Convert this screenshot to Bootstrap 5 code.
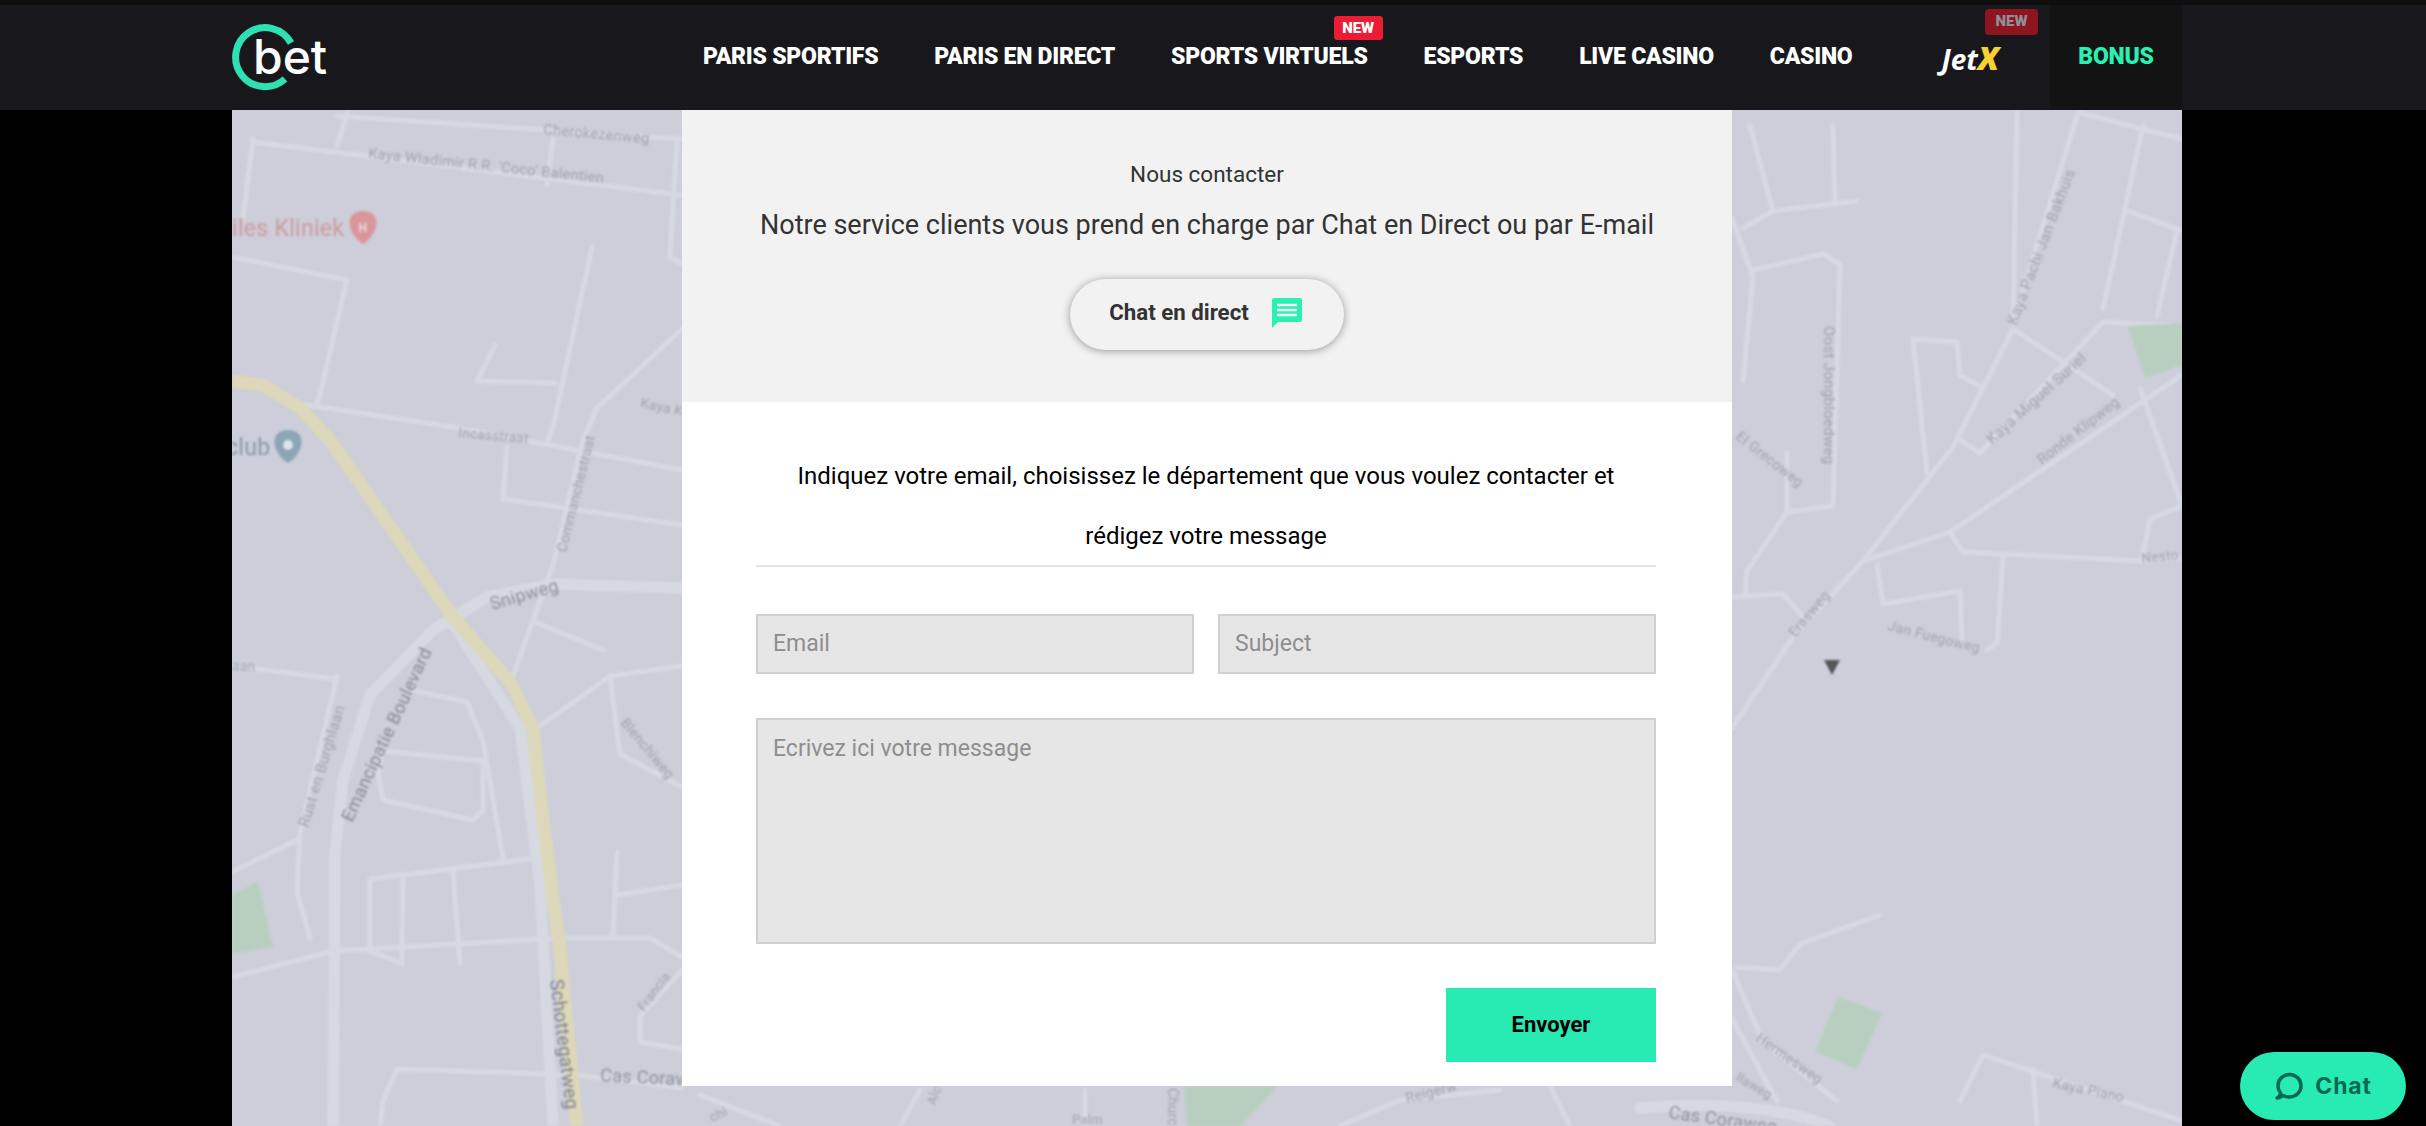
<!DOCTYPE html>
<html lang="fr">
<head>
    <meta charset="UTF-8">
    <meta name="viewport" content="width=device-width, initial-scale=1.0">
    <link href="https://cdn.jsdelivr.net/npm/bootstrap@5.3.0/dist/css/bootstrap.min.css" rel="stylesheet">
    <script src="https://cdn.jsdelivr.net/npm/bootstrap@5.3.0/dist/js/bootstrap.bundle.min.js"></script>
    <title>Cbet - Nous contacter</title>
    <style>
        html, body { height: 100%; }
        body { background: #000; font-family: Roboto, "Liberation Sans", sans-serif; overflow: hidden; }

        /* top bar */
        .top-bar { height: 110px; background: #18181c; border-top: 5px solid #0e0e0f; }
        .page-col { width: 1950px; margin-left: 232px; }
        .top-inner { height: 100%; }
        .top-links { gap: 56px; font-size: 23px; font-weight: 900; letter-spacing: -.25px; text-transform: uppercase; }
        .top-links a { color: #fff; text-decoration: none; position: relative; }
        .new-tag { position: absolute; background: #ed1c35; color: #fff; font-family: Roboto, sans-serif; font-style: normal; font-size: 15px; font-weight: 900; line-height: 1; letter-spacing: 0; border-radius: 3px; padding: 4.5px 8.5px; right: -15px; top: -24px; }
        .new-tag.dim { background: #8c1520; color: #8f8f95; right: -39px; top: -33px; padding: 5.5px 10.500px; border-radius: 4px; }
        .jetx-word { font-family: "Open Sans", sans-serif; font-style: italic; font-weight: 700; font-size: 28px; text-transform: none; letter-spacing: 0; line-height: 1; margin-left: 33px; margin-right: 51px; }
        .jetx-x { color: #f7d031; font-weight: 800; font-size: 32px; line-height: 1; }
        .bonus-cell { width: 132px; background: #131313; color: #2af0b4; font-size: 23px; font-weight: 900; letter-spacing: -.25px; }

        /* map and panel */
        .map-area { height: 1016px; position: relative; background: #cdced9; overflow: hidden; }
        .map-bg { position: absolute; inset: 0; filter: blur(.9px); }
        .map-bg text { font-family: Roboto, sans-serif; fill: #a0a3ae; letter-spacing: .3px; }
        .road { fill: none; stroke: #d7d9e2; stroke-width: 5; stroke-linecap: round; stroke-linejoin: round; }
        .road-wide { stroke-width: 11; }
        .road-main { fill: none; stroke: #dcd8b9; stroke-width: 13; stroke-linejoin: round; }
        .contact-panel { position: relative; width: 1050px; height: 976px; margin-left: 450px; background: #fff; }
        .contact-head { height: 292px; background: #f2f2f2; padding-top: 51px; color: #333; }
        .contact-title { font-size: 22.5px; line-height: 26px; margin-bottom: 21px; }
        .contact-sub { font-size: 27px; line-height: 34px; margin-bottom: 37px; }
        .chat-pill { width: 274px; height: 71px; border-radius: 36px; background: #f2f2f2; color: #333; border: 0; font-size: 22.25px; font-weight: 700; box-shadow: 0 1px 9px rgba(0,0,0,.38); gap: 23px; padding: 0 3px 3px 0; }
        .contact-body { padding: 0 76px 0 74px; }
        .contact-lead { color: #000; font-size: 24px; line-height: 60px; padding: 44px 0 0; margin: 0; height: 165px; border-bottom: 2px solid #e5e5e5; }
        .field-row { display: flex; gap: 24px; margin-top: 47px; }
        .field-box { display: block; width: 100%; height: 60px; background: #e6e6e6; border: 2px solid #d0d0d0; border-radius: 0; padding: 0 15px 2px; color: #333; font-size: 23px; }
        .field-box::placeholder { color: #8e8e8e; opacity: 1; }
        textarea.field-box { height: 226px; margin-top: 44px; padding-top: 15px; resize: none; line-height: 28px; }
        .send-btn { width: 210px; height: 74px; background: #27ebb2; color: #000; border: 0; border-radius: 0; font-size: 22px; font-weight: 700; margin-top: 44px; padding: 0 0 2px; }
        .live-chat { position: fixed; right: 20px; bottom: 6px; width: 166px; height: 68px; background: #27ebb2; border: 0; border-radius: 34px; color: #07694f; font-family: Inter, sans-serif; font-size: 23px; font-weight: 700; letter-spacing: .8px; gap: 11px; }
    </style>
</head>
<body>

    <header class="top-bar">
        <div class="page-col top-inner d-flex align-items-center justify-content-between">
            <a href="#" class="d-block">
                <svg class="d-block" width="98" height="70" viewBox="0 0 98 70">
                    <path d="M59 20 A29.500 29.500 0 1 0 53 56" fill="none" stroke="#2ee0b2" stroke-width="7"/>
                    <text x="21" y="50.500" font-family="Inter, Roboto, sans-serif" font-size="48" font-weight="500" fill="#fff">bet</text>
                </svg>
            </a>
            <nav class="d-flex align-items-center h-100">
                <div class="top-links d-flex align-items-center">
                    <a href="#">Paris sportifs</a>
                    <a href="#">Paris en direct</a>
                    <a href="#">Sports virtuels<span class="new-tag">NEW</span></a>
                    <a href="#">Esports</a>
                    <a href="#">Live casino</a>
                    <a href="#">Casino</a>
                    <a href="#" class="jetx-word">Jet<span class="jetx-x">X</span><span class="new-tag dim">NEW</span></a>
                </div>
                <div class="bonus-cell d-flex align-items-center justify-content-center h-100">BONUS</div>
            </nav>
        </div>
    </header>

    <main class="page-col map-area">
        <!-- map drawn in page coordinates -->
        <svg class="map-bg" viewBox="232 110 1950 1016" width="1950" height="1016">
            <g class="road">
                <path d="M337 116 L680 139"/>
                <path d="M253 142 L680 195"/>
                <path d="M253 139 L243 218"/>
                <path d="M347 113 L337 146"/>
                <path d="M553 139 L547 185"/>
                <path d="M677 139 L670 257 L682 264"/>
                <path d="M232 257 L347 280 L320 394 L317 404"/>
                <path d="M300 404 L453 427 L682 470"/>
                <path d="M592 247 L553 427 L548 440"/>
                <path d="M495 345 L477 381 L555 383"/>
                <path d="M682 329 L597 408 L583 440 L553 565 L513 676"/>
                <path d="M507 447 L503 499 L682 525"/>
                <path d="M232 666 L337 679"/>
                <path d="M337 676 L300 833 L297 892 L310 938"/>
                <path d="M407 689 L467 702 L483 741 L503 859"/>
                <path d="M383 751 L483 761 L483 810 L473 820 L383 800 L378 774 Z"/>
                <path d="M370 879 L530 859"/>
                <path d="M370 879 L370 951 L402 964 L403 879"/>
                <path d="M453 872 L460 964"/>
                <path d="M232 977 L333 951 L560 938 L650 938 L682 957"/>
                <path d="M297 840 L232 872"/>
                <path d="M617 853 L613 934"/>
                <path d="M617 895 L682 885"/>
                <path d="M682 970 L640 1016 L640 1042 L682 1049"/>
                <path d="M577 1075 L397 1069 L383 1101 L380 1126"/>
                <path d="M577 1075 L682 1088"/>
                <path d="M682 787 L620 754 L610 676 L537 728"/>
                <path d="M610 676 L682 666"/>
                <path d="M537 623 L603 650"/>
                <!-- below the panel -->
                <path d="M700 1095 L780 1126"/>
                <path d="M920 1090 L900 1126"/>
                <path d="M1085 1090 L1085 1126"/>
                <path d="M1340 1126 L1400 1100 L1500 1090"/>
                <path d="M1550 1086 L1570 1126"/>
                <!-- right side -->
                <path d="M1750 126 L1773 211 L1743 228"/>
                <path d="M1773 211 L1857 201"/>
                <path d="M1833 126 L1835 201"/>
                <path d="M1732 218 L1753 277 L1743 381"/>
                <path d="M1753 270 L1823 254 L1840 264 L1833 506 L1787 512"/>
                <path d="M1787 453 L1787 512 L1747 571 L1745 597"/>
                <path d="M1732 597 L1783 594 L1803 617"/>
                <path d="M1732 728 L1793 637 L1863 561 L1953 447 L2013 329"/>
                <path d="M1863 561 L1950 532 L2182 375"/>
                <path d="M1950 532 L1963 552 L2140 561 L2182 558"/>
                <path d="M1877 565 L1883 604 L1960 591 L1962 643"/>
                <path d="M2003 558 L1997 643 L1987 650"/>
                <path d="M2017 113 L2013 322"/>
                <path d="M2078 113 L2013 322"/>
                <path d="M2013 329 L2113 395"/>
                <path d="M1960 440 L1980 453 L2103 322 L2182 326"/>
                <path d="M2143 126 L2103 309"/>
                <path d="M2128 211 L2182 231"/>
                <path d="M2177 231 L2157 316"/>
                <path d="M2080 113 L2182 139"/>
                <path d="M2140 388 L2182 506 L2150 519 L2142 558"/>
                <path d="M1913 339 L1927 473"/>
                <path d="M1913 339 L1957 342 L1960 375 L1983 388"/>
                <path d="M1737 967 L1780 970 L1800 944 L1880 915"/>
                <path d="M1732 970 L1763 1042 L1837 1101"/>
                <path d="M1732 1019 L1777 1101"/>
                <path d="M1960 1101 L1983 1055 L2182 1121"/>
                <path d="M2033 1069 L2037 1126"/>
            </g>
            <path class="road road-wide" d="M682 588 L553 584 L487 597 L433 630 L370 695 L343 780 L335 853 L333 1126"/>
            <path class="road road-wide" d="M453 624 L520 728 L540 885 L553 1126"/>
            <path class="road road-wide" d="M1640 1108 C1720 1100 1790 1110 1830 1126"/>
            <path class="road-main" d="M232 381 L263 385 L300 408 L330 440 L453 617 L510 682 L533 728 L543 820 L560 951 L577 1126"/>
            <!-- park patches -->
            <path d="M232 895 L258 882 L273 947 L232 954 Z" fill="#b8cfc0"/>
            <path d="M2128 326 L2182 323 L2182 365 L2145 378 Z" fill="#b8cfc0"/>
            <path d="M1838 997 L1882 1013 L1857 1069 L1815 1052 Z" fill="#b8cfc0"/>
            <path d="M1184 1086 L1278 1086 L1241 1126 L1187 1126 Z" fill="#b8cfc0"/>
            <!-- labels -->
            <text x="543" y="134" font-size="14.500" transform="rotate(5 543 134)">Cherokezenweg</text>
            <text x="368" y="158" font-size="14.500" transform="rotate(6 368 158)">Kaya Wladimir R.R. 'Coco' Balentien</text>
            <text x="232" y="236" font-size="23" style="fill:#cf9a9e">iles Kliniek</text>
            <text x="226" y="455" font-size="23" style="fill:#8f97a6">club</text>
            <text x="458" y="437" font-size="13.500" transform="rotate(5 458 437)">Incasstraat</text>
            <text x="640" y="407" font-size="13.500" transform="rotate(12 640 407)">Kaya K</text>
            <text x="566" y="553" font-size="14" transform="rotate(-76 566 553)">Commanchestraat</text>
            <text x="492" y="610" font-size="18" style="fill:#8f929d" transform="rotate(-16 492 610)">Snipweg</text>
            <text x="232" y="670" font-size="13.500" transform="rotate(3 232 670)">aan</text>
            <text x="352" y="823" font-size="18" style="fill:#868a95" transform="rotate(-65 352 823)">Emancipatie Boulevard</text>
            <text x="308" y="828" font-size="15" transform="rotate(-73 308 828)">Rust en Burghlaan</text>
            <text x="620" y="723" font-size="14" transform="rotate(50 620 723)">Blenchiweg</text>
            <text x="550" y="980" font-size="19" style="fill:#7f838e" transform="rotate(83 550 980)">Schottegatweg</text>
            <text x="600" y="1081" font-size="18" style="fill:#8f929d" transform="rotate(3 600 1081)">Cas Corav</text>
            <text x="644" y="1012" font-size="13" transform="rotate(-53 644 1012)">Francia</text>
            <text x="712" y="1122" font-size="13" transform="rotate(-25 712 1122)">chi</text>
            <text x="935" y="1106" font-size="13" transform="rotate(-70 935 1106)">Alc</text>
            <text x="1072" y="1124" font-size="13">Palm</text>
            <text x="1168" y="1088" font-size="14" transform="rotate(90 1168 1088)">Church</text>
            <text x="1407" y="1103" font-size="14" transform="rotate(-14 1407 1103)">Reigerw</text>
            <text x="1735" y="438" font-size="14" transform="rotate(38 1735 438)">El Grecoweg</text>
            <text x="1824" y="326" font-size="15" transform="rotate(90 1824 326)">Oost Jongbloedweg</text>
            <text x="2016" y="326" font-size="15" transform="rotate(-69 2016 326)">Kaya Pachi Jan Bakhuis</text>
            <text x="1992" y="445" font-size="15" transform="rotate(-42 1992 445)">Kaya Miguel Suriel</text>
            <text x="2042" y="465" font-size="14.500" transform="rotate(-38 2042 465)">Ronde Klipweg</text>
            <text x="2142" y="563" font-size="13.500" transform="rotate(-6 2142 563)">Nesto</text>
            <text x="1795" y="638" font-size="14" transform="rotate(-50 1795 638)">Erasweg</text>
            <text x="1887" y="630" font-size="14" transform="rotate(14 1887 630)">Jan Fuegoweg</text>
            <text x="1755" y="1040" font-size="14" transform="rotate(35 1755 1040)">Hermesweg</text>
            <text x="1735" y="1080" font-size="13" transform="rotate(30 1735 1080)">llaweg</text>
            <text x="2052" y="1087" font-size="14" transform="rotate(12 2052 1087)">Kaya Piano</text>
            <text x="1668" y="1118" font-size="18" style="fill:#8f929d" transform="rotate(8 1668 1118)">Cas Coraweg</text>
            <!-- pins -->
            <path d="M363 211 c-18 0 -18 21 0 33 c18 -12 18 -33 0 -33z" fill="#d9979c"/>
            <text x="358.500" y="232" font-size="12" font-weight="700" style="fill:#eed9dc">H</text>
            <path d="M288 430 c-18 0 -18 21 0 33 c18 -12 18 -33 0 -33z" fill="#8ba6b5"/>
            <circle cx="288" cy="445" r="5" fill="#dfe4ea"/>
            <path d="M1824 660 h16 l-8 15 z" fill="#55555a"/>
        </svg>

        <section class="contact-panel">
            <div class="contact-head text-center">
                <div class="contact-title">Nous contacter</div>
                <div class="contact-sub">Notre service clients vous prend en charge par Chat en Direct ou par E-mail</div>
                <button class="chat-pill btn d-inline-flex align-items-center justify-content-center">
                    Chat en direct
                    <svg width="30" height="30" viewBox="0 0 30 30"><path d="M2 0 H28 a2 2 0 0 1 2 2 V22 a2 2 0 0 1 -2 2 H6 L0 30 V2 a2 2 0 0 1 2 -2z" fill="#2af0b4"/><path d="M5 7 H25 M5 12 H25 M5 17 H25" stroke="#f2f2f2" stroke-width="2.400"/></svg>
                </button>
            </div>
            <div class="contact-body">
                <p class="contact-lead text-center">Indiquez votre email, choisissez le département que vous voulez contacter et rédigez votre message</p>
                <form onsubmit="return false">
                    <div class="field-row">
                        <input type="text" class="field-box" placeholder="Email">
                        <input type="text" class="field-box" placeholder="Subject">
                    </div>
                    <textarea class="field-box" placeholder="Ecrivez ici votre message"></textarea>
                    <div class="d-flex justify-content-end">
                        <button class="send-btn btn">Envoyer</button>
                    </div>
                </form>
            </div>
        </section>
    </main>

    <button class="live-chat btn d-flex align-items-center justify-content-center">
        <svg width="30" height="30" viewBox="0 0 30 30"><path d="M3 27 C6 27 8 25 9 24.500 C11 25.500 13 26 15 26 C22 26 27 21 27 15 C27 8.500 22 3.500 15.500 3.500 C9 3.500 4 8.500 4 15 C4 18 5 20 6.500 22 C6.500 24 5 26 3 27 Z" fill="none" stroke="#07694f" stroke-width="3.500" stroke-linejoin="round"/></svg>
        Chat
    </button>

</body>
</html>
